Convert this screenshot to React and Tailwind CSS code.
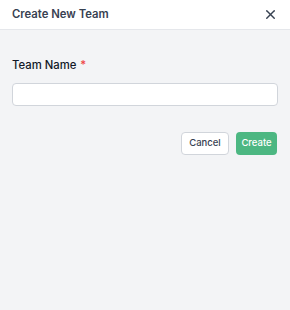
import { X } from 'lucide-react';

export default function App() {
   return (
      <div className="h-[310px] w-[290px] bg-[#f3f4f6] font-['Inter',sans-serif]">
         <div className="flex h-[30px] items-center justify-between border-b border-[#e5e7eb] bg-white pl-3 pr-[12px]">
            <h2 className="text-[11.3px] font-semibold text-[#374151]">Create New Team</h2>
            <X size={15} strokeWidth={2.2} className="text-[#374151]" />
         </div>

         <div className="px-3 pt-[27px]">
            <label className="block text-[11.3px] font-medium leading-[16px] text-[#111827]">
               Team Name<span className="ml-[4px] text-[#ef4444]">*</span>
            </label>
            <input
               type="text"
               className="mt-[10px] block h-[23px] w-full rounded-[4px] border border-[#d1d5db] bg-white"
            />

            <div className="mt-[26px] flex justify-end gap-[7px] pr-[1px]">
               <button
                  type="button"
                  className="h-[23px] w-[48px] rounded-[4px] border border-[#d1d5db] bg-white text-[9.5px] font-medium text-[#374151]"
               >
                  Cancel
               </button>
               <button
                  type="button"
                  className="h-[23px] w-[41px] rounded-[4px] bg-[#4cb782] text-[9.5px] font-medium text-white"
               >
                  Create
               </button>
            </div>
         </div>
      </div>
   );
}
